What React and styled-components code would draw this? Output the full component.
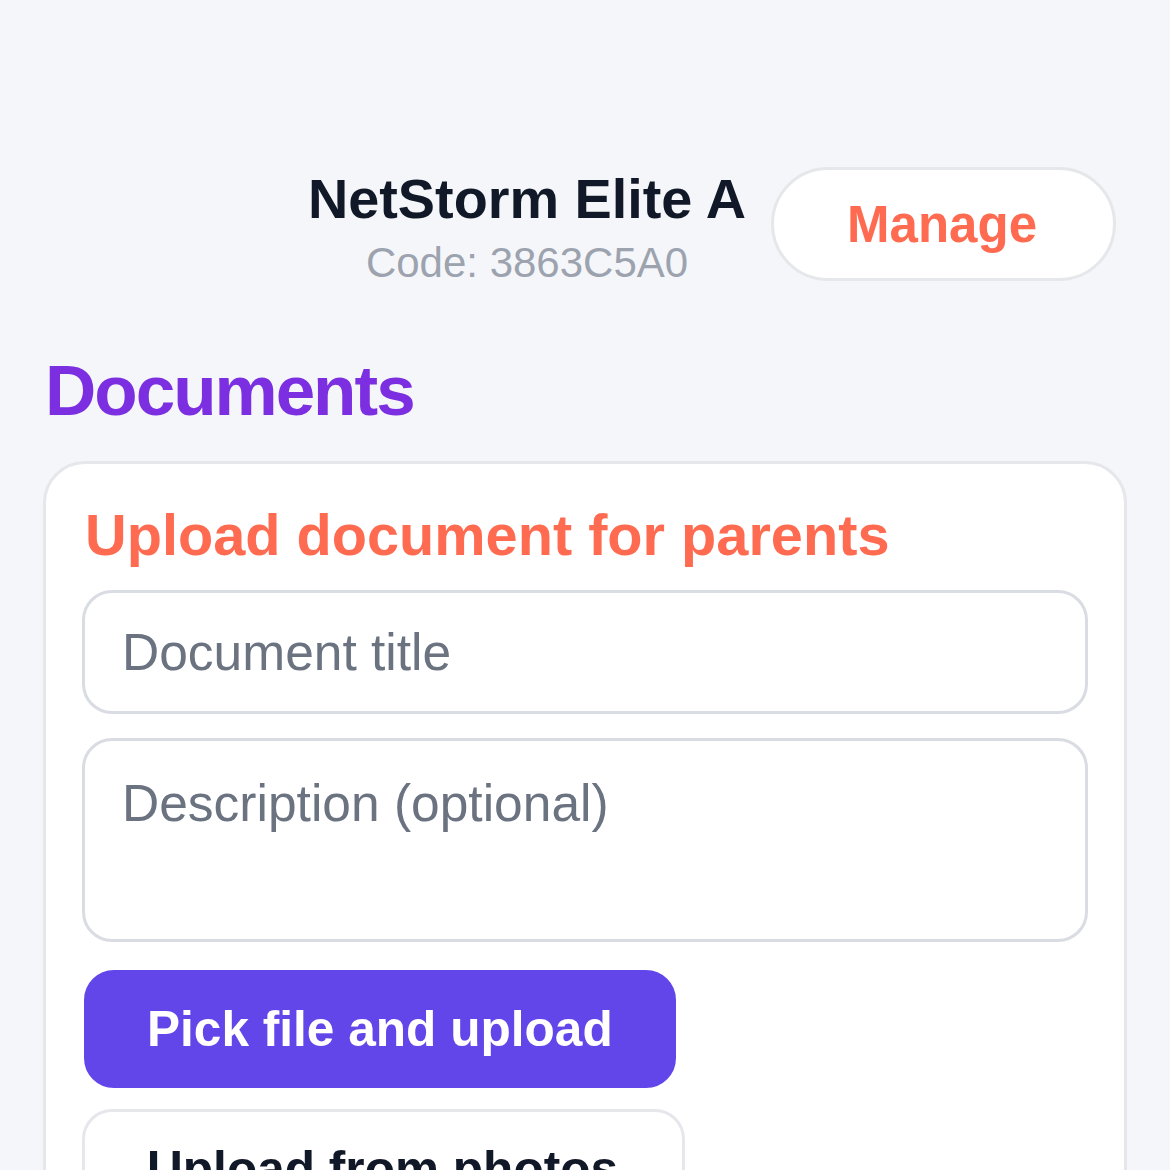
import React, { useState } from "react";
import styled, { createGlobalStyle } from "styled-components";

const GlobalStyle = createGlobalStyle`
  html, body {
    margin: 0;
    padding: 0;
    background: #f5f6fa;
    font-family: "Liberation Sans", Arial, sans-serif;
  }
  * {
    box-sizing: border-box;
  }
`;

const Page = styled.div`
  min-height: 1170px;
  padding: 167px 43px 0;
  overflow: hidden;
`;

const Header = styled.div`
  display: flex;
  justify-content: flex-end;
  align-items: flex-start;
  gap: 25px;
  padding-right: 11px;
`;

const TitleBlock = styled.div`
  display: flex;
  flex-direction: column;
  align-items: center;
  text-align: center;
  padding-top: 2px;
`;

const DeviceName = styled.div`
  font-size: 55.8px;
  line-height: 60px;
  font-weight: 700;
  color: #111827;
`;

const DeviceCode = styled.div`
  margin-top: 11px;
  font-size: 42px;
  line-height: 46px;
  color: #9ca3af;
`;

const PillButton = styled.button`
  height: 114px;
  padding: 0 76px 0 73px;
  border: 3px solid #e5e7eb;
  border-radius: 57px;
  background: #ffffff;
  color: #ff6b51;
  font-family: inherit;
  font-size: 51px;
  font-weight: 700;
  cursor: pointer;
`;

const SectionTitle = styled.h1`
  margin: 65px 0 30px;
  padding-left: 2px;
  font-size: 71px;
  line-height: 80px;
  font-weight: 700;
  letter-spacing: -2px;
  color: #7b2fe1;
`;

const Card = styled.div`
  display: flex;
  flex-direction: column;
  align-items: flex-start;
  padding: 38px 36px 40px;
  background: #ffffff;
  border: 3px solid #e5e7eb;
  border-radius: 42px;
`;

const CardTitle = styled.h2`
  margin: 0 0 22px;
  padding-left: 3px;
  font-size: 57.7px;
  line-height: 66px;
  font-weight: 700;
  color: #ff6b51;
`;

const fieldBase = `
  width: 100%;
  border: 3px solid #dadce3;
  border-radius: 30px;
  background: #ffffff;
  padding: 0 37px;
  font-family: "Liberation Sans", Arial, sans-serif;
  font-size: 51.5px;
  color: #111827;
  outline: none;
  &::placeholder {
    color: #6b7280;
    opacity: 1;
  }
`;

const TextInput = styled.input`
  ${fieldBase}
  height: 124px;
`;

const TextArea = styled.textarea`
  ${fieldBase}
  display: block;
  height: 204px;
  margin-top: 24px;
  padding-top: 32px;
  line-height: 1.2;
  resize: none;
`;

const ActionButton = styled.button`
  height: ${(p) => (p.$primary ? "118px" : "120px")};
  margin-top: ${(p) => p.$gap}px;
  margin-left: ${(p) => (p.$primary ? "2px" : "0")};
  padding: ${(p) => (p.$primary ? "0 60px" : "0 64px 0 62px")};
  border: 3px solid ${(p) => (p.$primary ? "#6246ea" : "#e5e7eb")};
  border-radius: 30px;
  background: ${(p) => (p.$primary ? "#6246ea" : "#ffffff")};
  color: ${(p) => (p.$primary ? "#ffffff" : "#111827")};
  font-family: inherit;
  font-size: 49.6px;
  font-weight: 700;
  cursor: pointer;
`;

export default function App() {
  const [title, setTitle] = useState("");
  const [description, setDescription] = useState("");

  return (
    <Page>
      <GlobalStyle />
      <Header>
        <TitleBlock>
          <DeviceName>NetStorm Elite A</DeviceName>
          <DeviceCode>Code: 3863C5A0</DeviceCode>
        </TitleBlock>
        <PillButton type="button">Manage</PillButton>
      </Header>

      <SectionTitle>Documents</SectionTitle>

      <Card>
        <CardTitle>Upload document for parents</CardTitle>
        <TextInput
          placeholder="Document title"
          value={title}
          onChange={(e) => setTitle(e.target.value)}
        />
        <TextArea
          placeholder="Description (optional)"
          value={description}
          onChange={(e) => setDescription(e.target.value)}
        />
        <ActionButton type="button" $primary $gap={28}>
          Pick file and upload
        </ActionButton>
        <ActionButton type="button" $gap={21}>
          Upload from photos
        </ActionButton>
      </Card>
    </Page>
  );
}
